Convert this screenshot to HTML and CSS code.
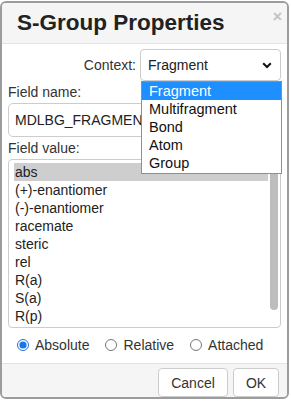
FILE: index.html
```html
<!DOCTYPE html>
<html lang="en">
<head>
  <meta charset="UTF-8">
  <meta name="viewport" content="width=device-width, initial-scale=1.0">
  <title>S-Group Properties</title>
  <link rel="stylesheet" href="styles.css">
</head>
<body>

  <div class="dialog">
    <div class="dialog-header">
      <h1 class="title">S-Group Properties</h1>
      <span class="close">&times;</span>
    </div>

    <div class="dialog-body">
      <div class="context-row">
        <span class="context-label">Context:</span>
        <div class="select-wrap">
          <div class="select">
            <span>Fragment</span>
            <svg class="chevron" width="10" height="7" viewBox="0 0 10 7">
              <path d="M1.2 1.2 L5 5 L8.8 1.2" fill="none" stroke="#111" stroke-width="2"/>
            </svg>
          </div>
          <ul class="dropdown">
            <li class="active">Fragment</li>
            <li>Multifragment</li>
            <li>Bond</li>
            <li>Atom</li>
            <li>Group</li>
          </ul>
        </div>
      </div>

      <label class="field-label">Field name:</label>
      <div class="text-input">MDLBG_FRAGMENT_STEREO</div>

      <label class="field-label">Field value:</label>
      <div class="listbox">
        <div class="options">
          <div class="option selected">abs</div>
          <div class="option">(+)-enantiomer</div>
          <div class="option">(-)-enantiomer</div>
          <div class="option">racemate</div>
          <div class="option">steric</div>
          <div class="option">rel</div>
          <div class="option">R(a)</div>
          <div class="option">S(a)</div>
          <div class="option">R(p)</div>
          <div class="option">S(p)</div>
        </div>
        <div class="scrollbar">
          <div class="thumb"></div>
        </div>
      </div>

      <div class="radio-row">
        <label class="radio"><input type="radio" name="type" checked> Absolute</label>
        <label class="radio"><input type="radio" name="type"> Relative</label>
        <label class="radio"><input type="radio" name="type"> Attached</label>
      </div>
    </div>

    <div class="dialog-footer">
      <button class="btn cancel">Cancel</button>
      <button class="btn ok">OK</button>
    </div>
  </div>

</body>
</html>
```

FILE: styles.css
```css
body {
  margin: 0;
  padding: 1px 0 0 0;
  background: #fff;
  font-family: "Liberation Sans", Arial, sans-serif;
  font-size: 14px;
  color: #222;
}

.dialog {
  width: 285px;
  height: 394px;
  border: 2px solid #9c9c9c;
  border-radius: 6px;
  display: flex;
  flex-direction: column;
  overflow: hidden;
  background: #fff;
}

.dialog-header {
  height: 40px;
  background: #f5f5f5;
  border-bottom: 1px solid #e3e3e3;
  display: flex;
  justify-content: space-between;
  align-items: flex-start;
  padding: 0 5px 0 15px;
}

.title {
  margin: 0;
  padding-top: 7px;
  font-size: 22.5px;
  line-height: 26px;
  font-weight: bold;
  color: #222;
}

.close {
  color: #c2c2c2;
  font-weight: bold;
  font-size: 16px;
  line-height: 16px;
  padding-top: 6px;
}

.dialog-body {
  flex: 1;
  padding: 5px 6px 0 6px;
  display: flex;
  flex-direction: column;
}

.context-row {
  display: flex;
  align-items: center;
  gap: 4px;
}

.context-label {
  flex: 1;
  text-align: right;
  color: #333;
}

.select-wrap {
  position: relative;
  width: 141px;
}

.select {
  height: 30px;
  border: 1px solid #ccc;
  border-radius: 4px;
  display: flex;
  align-items: center;
  justify-content: space-between;
  padding: 0 8px 0 7px;
}

.dropdown {
  position: absolute;
  top: 32px;
  left: 1px;
  width: 139px;
  margin: 0;
  padding: 0 0 1px 0;
  list-style: none;
  background: #fff;
  border: 1px solid #8f8f8f;
  z-index: 2;
}

.dropdown li {
  height: 18px;
  line-height: 18px;
  padding-left: 7px;
  font-size: 14.5px;
  color: #111;
}

.dropdown li.active {
  background: #1e8fff;
  color: #fff;
}

.field-label {
  display: block;
  line-height: 18px;
  margin-top: 2px;
  color: #333;
}

.text-input {
  height: 32px;
  line-height: 32px;
  margin-top: 2px;
  border: 1px solid #ccc;
  border-radius: 5px;
  padding: 0 6px;
  white-space: nowrap;
  overflow: hidden;
}

.listbox {
  height: 167px;
  margin-top: 2px;
  border: 1px solid #ccc;
  border-radius: 4px;
  display: flex;
  overflow: hidden;
}

.options {
  flex: 1;
  padding: 3px 2px 0 5px;
  overflow: hidden;
}

.option {
  height: 18px;
  line-height: 18px;
  padding-left: 1px;
  color: #222;
}

.option.selected {
  background: #cecece;
}

.scrollbar {
  width: 9px;
  padding-right: 1px;
}

.thumb {
  width: 8px;
  height: 150px;
  background: #bdbdbd;
  border-radius: 0 0 4px 4px;
}

.radio-row {
  display: flex;
  align-items: center;
  gap: 16px;
  height: 33px;
  padding-left: 9px;
  color: #333;
}

.radio {
  display: flex;
  align-items: center;
  gap: 6px;
}

.radio input {
  margin: 0;
  width: 12px;
  height: 12px;
  accent-color: #1a73e8;
}

.dialog-footer {
  height: 34px;
  background: #f5f5f5;
  border-top: 1px solid #e3e3e3;
  display: flex;
  justify-content: flex-end;
  gap: 5px;
  padding: 4px 8px 0 0;
  box-sizing: border-box;
}

.btn {
  height: 29px;
  background: #fff;
  border: 1px solid #ccc;
  border-radius: 4px;
  font-family: "Liberation Sans", Arial, sans-serif;
  font-size: 14px;
  color: #333;
}

.cancel {
  width: 70px;
}

.ok {
  width: 46px;
}
```
